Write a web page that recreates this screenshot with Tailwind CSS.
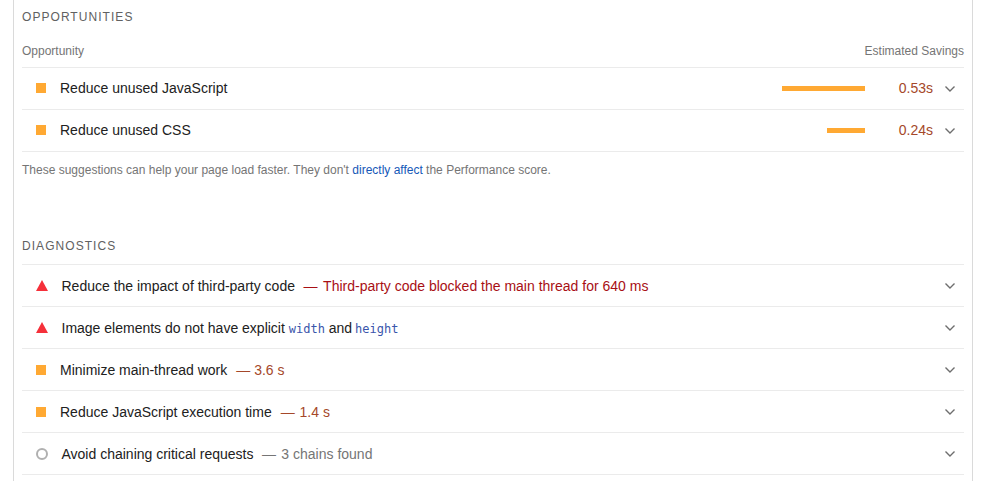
<!DOCTYPE html>
<html lang="en">
<head>
    <meta charset="UTF-8">
    <meta name="viewport" content="width=device-width, initial-scale=1.0">
    <title>Audits</title>
    <script src="https://cdn.jsdelivr.net/npm/@tailwindcss/browser@4"></script>
</head>
<body class="bg-white h-[481px] overflow-hidden font-['Liberation_Sans',Arial,sans-serif] text-[#212121]">
    <main class="ml-[13px] w-[960px] h-[481px] border-x border-[#dadada] pl-2 pr-2">
        <!-- opportunities -->
        <section>
            <h2 class="h-[34px] flex items-center text-xs uppercase tracking-[1.05px] text-[#616161]">Opportunities</h2>
            <div class="h-[34px] flex items-center justify-between text-xs text-[#757575] border-b border-[#ebebeb]">
                <span>Opportunity</span>
                <span>Estimated Savings</span>
            </div>
            <div class="h-[42px] pb-[2px] flex items-center border-b border-[#ebebeb] text-sm">
                <span class="w-[10px] h-[10px] ml-[14px] bg-[#ffa933] shrink-0"></span>
                <span class="ml-[14px]">Reduce unused JavaScript</span>
                <span class="ml-auto mt-[2px] w-[83px] h-[5px] bg-[#ffa933]"></span>
                <span class="w-[68px] text-right text-[#a5482a]">0.53s</span>
                <svg class="ml-[12px] mr-[9px] mt-[2px]" width="10" height="6" viewBox="0 0 10 6" fill="none" stroke="#6e6e6e" stroke-width="1.4"><path d="M0.5 0.5 L5 5 L9.5 0.5"/></svg>
            </div>
            <div class="h-[42px] pb-[2px] flex items-center border-b border-[#ebebeb] text-sm">
                <span class="w-[10px] h-[10px] ml-[14px] bg-[#ffa933] shrink-0"></span>
                <span class="ml-[14px]">Reduce unused CSS</span>
                <span class="ml-auto mt-[2px] w-[38px] h-[5px] bg-[#ffa933]"></span>
                <span class="w-[68px] text-right text-[#a5482a]">0.24s</span>
                <svg class="ml-[12px] mr-[9px] mt-[2px]" width="10" height="6" viewBox="0 0 10 6" fill="none" stroke="#6e6e6e" stroke-width="1.4"><path d="M0.5 0.5 L5 5 L9.5 0.5"/></svg>
            </div>
            <p class="mt-[11px] text-xs leading-[14px] text-[#757575]">These suggestions can help your page load faster. They don't <a class="text-[#1558b8]" href="#">directly affect</a> the Performance score.</p>
        </section>

        <!-- diagnostics -->
        <section class="mt-[58px]">
            <h2 class="h-[30px] pb-[7px] flex items-center text-xs uppercase tracking-[1.05px] text-[#616161] border-b border-[#ebebeb]">Diagnostics</h2>
            <div class="h-[42px] flex items-center border-b border-[#ebebeb] text-sm">
                <svg class="ml-[14px] shrink-0" width="12" height="11" viewBox="0 0 12 11"><path d="M6 0 L12 11 L0 11 Z" fill="#f5303a"/></svg>
                <span class="ml-[13.5px]">Reduce the impact of third-party code</span>
                <span class="ml-[8.5px] text-[#a80f14]"><span class="mr-[2px]">—</span> Third-party code blocked the main thread for 640 ms</span>
                <svg class="ml-auto mr-[9px]" width="10" height="6" viewBox="0 0 10 6" fill="none" stroke="#6e6e6e" stroke-width="1.4"><path d="M0.5 0.5 L5 5 L9.5 0.5"/></svg>
            </div>
            <div class="h-[42px] flex items-center border-b border-[#ebebeb] text-sm">
                <svg class="ml-[14px] shrink-0" width="12" height="11" viewBox="0 0 12 11"><path d="M6 0 L12 11 L0 11 Z" fill="#f5303a"/></svg>
                <span class="ml-[13.5px]">Image elements do not have explicit <code class="font-['DejaVu_Sans_Mono',monospace] text-xs text-[#3a56ab]">width</code> and <code class="-ml-[1px] font-['DejaVu_Sans_Mono',monospace] text-xs text-[#3a56ab]">height</code></span>
                <svg class="ml-auto mr-[9px]" width="10" height="6" viewBox="0 0 10 6" fill="none" stroke="#6e6e6e" stroke-width="1.4"><path d="M0.5 0.5 L5 5 L9.5 0.5"/></svg>
            </div>
            <div class="h-[42px] flex items-center border-b border-[#ebebeb] text-sm">
                <span class="w-[10px] h-[10px] ml-[14px] bg-[#ffa933] shrink-0"></span>
                <span class="ml-[14px]">Minimize main-thread work</span>
                <span class="ml-[9px] text-[#a5482a]">— 3.6 s</span>
                <svg class="ml-auto mr-[9px]" width="10" height="6" viewBox="0 0 10 6" fill="none" stroke="#6e6e6e" stroke-width="1.4"><path d="M0.5 0.5 L5 5 L9.5 0.5"/></svg>
            </div>
            <div class="h-[42px] flex items-center border-b border-[#ebebeb] text-sm">
                <span class="w-[10px] h-[10px] ml-[14px] bg-[#ffa933] shrink-0"></span>
                <span class="ml-[14px]">Reduce JavaScript execution time</span>
                <span class="ml-[9px] text-[#a5482a]"><span class="mr-[1px]">—</span> 1.4 s</span>
                <svg class="ml-auto mr-[9px]" width="10" height="6" viewBox="0 0 10 6" fill="none" stroke="#6e6e6e" stroke-width="1.4"><path d="M0.5 0.5 L5 5 L9.5 0.5"/></svg>
            </div>
            <div class="h-[42px] flex items-center border-b border-[#ebebeb] text-sm">
                <svg class="ml-[14px] shrink-0" width="12" height="12" viewBox="0 0 12 12"><circle cx="6" cy="6" r="5" fill="none" stroke="#b0b0b0" stroke-width="2"/></svg>
                <span class="ml-[13.5px]">Avoid chaining critical requests</span>
                <span class="ml-[8.5px] text-[#757575]"><span class="mr-[1.5px]">—</span> 3 chains found</span>
                <svg class="ml-auto mr-[9px]" width="10" height="6" viewBox="0 0 10 6" fill="none" stroke="#6e6e6e" stroke-width="1.4"><path d="M0.5 0.5 L5 5 L9.5 0.5"/></svg>
            </div>
        </section>
    </main>
</body>
</html>
